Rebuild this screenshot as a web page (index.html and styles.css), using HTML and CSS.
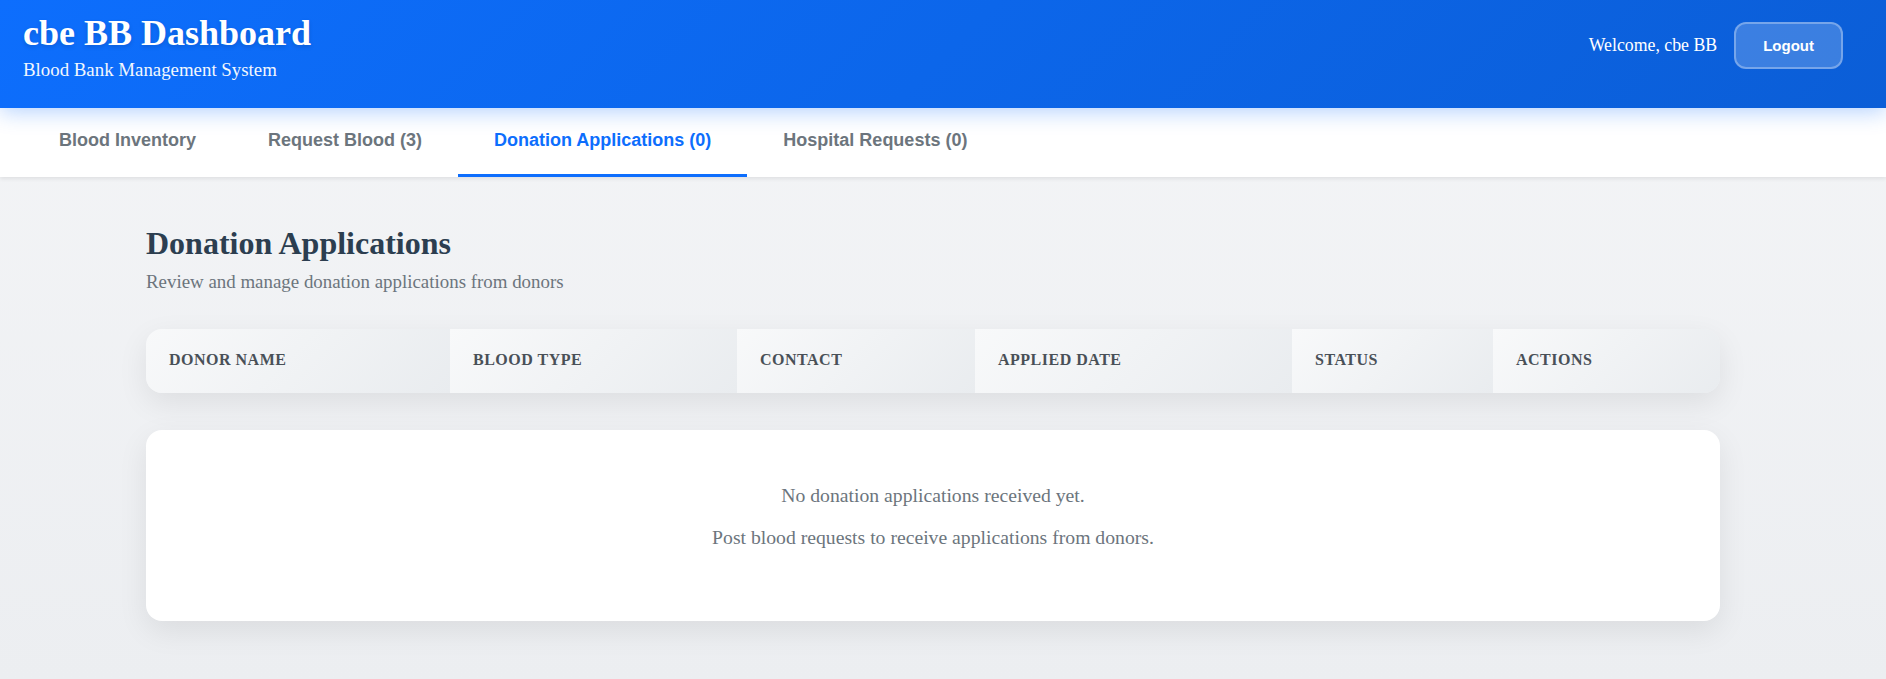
FILE: index.html
```html
<!DOCTYPE html>
<html lang="en">
<head>
<meta charset="utf-8">
<title>cbe BB Dashboard</title>
<link rel="stylesheet" href="styles.css">
</head>
<body>
<header class="topbar">
  <div class="brand">
    <h1 class="brand-title">cbe BB Dashboard</h1>
    <p class="brand-sub">Blood Bank Management System</p>
  </div>
  <div class="user">
    <span class="welcome">Welcome, cbe BB</span>
    <button class="logout" type="button">Logout</button>
  </div>
</header>
<nav class="tabs">
  <button class="tab" type="button">Blood Inventory</button>
  <button class="tab" type="button">Request Blood (3)</button>
  <button class="tab active" type="button">Donation Applications (0)</button>
  <button class="tab" type="button">Hospital Requests (0)</button>
</nav>
<main class="main">
  <h2 class="page-title">Donation Applications</h2>
  <p class="page-sub">Review and manage donation applications from donors</p>
  <div class="table-wrap">
    <table class="apps">
      <thead>
        <tr>
          <th class="c-name">Donor Name</th>
          <th class="c-type">Blood Type</th>
          <th class="c-contact">Contact</th>
          <th class="c-date">Applied Date</th>
          <th class="c-status">Status</th>
          <th class="c-actions">Actions</th>
        </tr>
      </thead>
      <tbody></tbody>
    </table>
  </div>
  <div class="empty">
    <p class="empty-line">No donation applications received yet.</p>
    <p class="empty-line">Post blood requests to receive applications from donors.</p>
  </div>
</main>
</body>
</html>
```

FILE: styles.css
```css
* { box-sizing: border-box; }

html, body {
  margin: 0;
  padding: 0;
}

body {
  font-family: "Liberation Serif", "Times New Roman", serif;
  background: linear-gradient(180deg, #f4f5f7 0%, #eceef1 100%);
  min-height: 679px;
  overflow: hidden;
}

.topbar {
  position: relative;
  z-index: 2;
  display: flex;
  justify-content: space-between;
  align-items: flex-start;
  height: 108px;
  padding: 12px 43px 0 23px;
  background: linear-gradient(135deg, #0d6efd 0%, #0b5ed7 100%);
  box-shadow: 0 4px 20px rgba(13, 110, 253, 0.3);
  color: #fff;
}

.brand-title {
  margin: 0;
  font-size: 36px;
  font-weight: bold;
  line-height: normal;
  text-shadow: 0 2px 4px rgba(0, 0, 0, 0.15);
}

.brand-sub {
  margin: 5px 0 0;
  font-size: 18.85px;
  line-height: normal;
  opacity: 0.95;
}

.user {
  display: flex;
  align-items: center;
  gap: 17px;
  margin-top: 10px;
}

.welcome {
  font-size: 17.8px;
}

.logout {
  font-family: "Liberation Sans", Arial, sans-serif;
  font-size: 15px;
  font-weight: bold;
  color: #fff;
  background: rgba(255, 255, 255, 0.2);
  border: 2px solid rgba(255, 255, 255, 0.3);
  border-radius: 12px;
  padding: 13px 27px;
  line-height: normal;
  cursor: pointer;
}

.tabs {
  position: relative;
  z-index: 1;
  display: flex;
  padding-left: 23px;
  background: #fff;
  box-shadow: 0 2px 4px rgba(0, 0, 0, 0.08);
}

.tab {
  font-family: "Liberation Sans", Arial, sans-serif;
  font-size: 18px;
  font-weight: bold;
  line-height: normal;
  color: #6c757d;
  background: transparent;
  border: 0;
  border-bottom: 3px solid transparent;
  padding: 22px 36px 23px;
  margin: 0;
  cursor: pointer;
}

.tab.active {
  color: #0d6efd;
  border-bottom-color: #0d6efd;
}

.main {
  padding: 48px 166px 32px 146px;
}

.page-title {
  margin: 0;
  font-size: 32px;
  font-weight: bold;
  line-height: normal;
  color: #2c3e50;
}

.page-sub {
  margin: 9px 0 0;
  font-size: 18.9px;
  line-height: normal;
  color: #6c757d;
}

.table-wrap {
  margin-top: 36px;
  border-radius: 16px;
  overflow: hidden;
  box-shadow: 0 10px 30px rgba(0, 0, 0, 0.08);
}

.apps {
  width: 100%;
  table-layout: fixed;
  border-collapse: separate;
  border-spacing: 0;
}

.apps th {
  padding: 22px 22px 23.6px 23px;
  text-align: left;
  font-size: 16px;
  font-weight: bold;
  line-height: normal;
  text-transform: uppercase;
  letter-spacing: 0.5px;
  color: #495057;
  background: linear-gradient(135deg, #f8f9fa 0%, #e9ecef 100%);
}

.c-name { width: 304px; }
.c-type { width: 287px; }
.c-contact { width: 238px; }
.c-date { width: 317px; }
.c-status { width: 201px; }
.c-actions { width: 227px; }

.empty {
  margin-top: 37px;
  display: flex;
  flex-direction: column;
  align-items: center;
  gap: 19px;
  padding: 54px 20px 72px;
  background: #fff;
  border-radius: 16px;
  box-shadow: 0 10px 30px rgba(0, 0, 0, 0.08);
}

.empty-line {
  margin: 0;
  font-size: 19.7px;
  line-height: normal;
  color: #6c757d;
}
```
